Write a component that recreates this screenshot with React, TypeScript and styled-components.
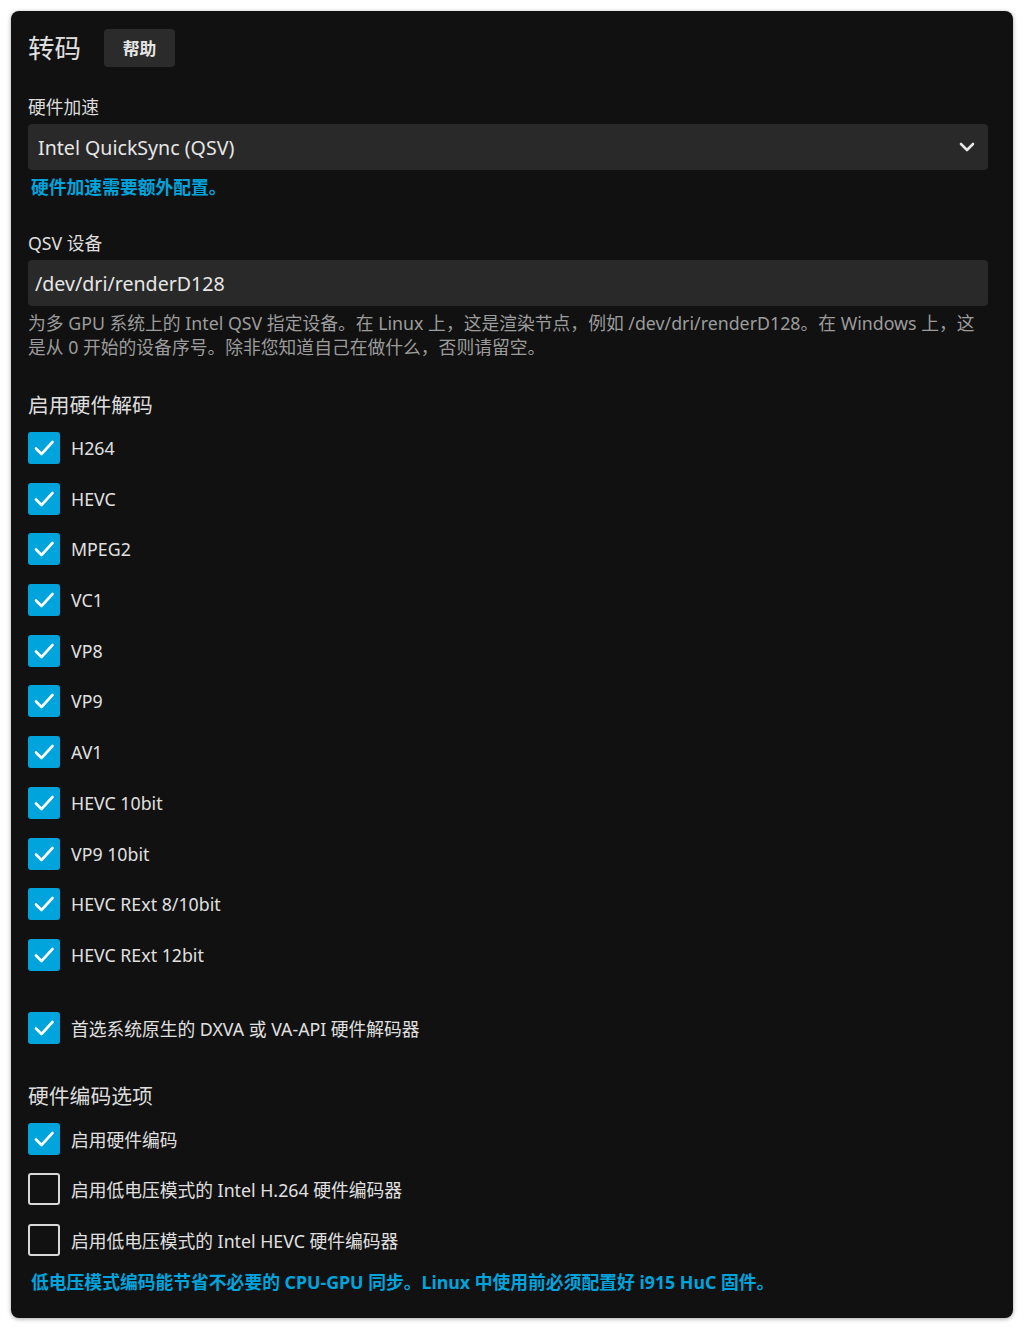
import { FC } from "react";
import styled, { createGlobalStyle } from "styled-components";

const GlobalStyle = createGlobalStyle`
  body {
    margin: 0;
    padding: 11px;
    background: #ffffff;
    font-family: "Noto Sans", "Noto Sans CJK SC", sans-serif;
  }
`;

const Card = styled.div`
  width: 1002px;
  box-sizing: border-box;
  background: #111111;
  border-radius: 8px;
  box-shadow: 0 1px 4px rgba(0, 0, 0, 0.35);
  padding: 18px 25px 24px 17px;
  color: #dddddd;
`;

const Header = styled.div`
  display: flex;
  align-items: center;
  gap: 23px;
`;

const Title = styled.h2`
  margin: 0;
  font-size: 26.5px;
  font-weight: 400;
  line-height: 38px;
  color: #e0e0e0;
`;

const HelpButton = styled.button`
  height: 38px;
  width: 71px;
  border: none;
  border-radius: 4px;
  background: #2b2b2b;
  color: #e6e6e6;
  font-family: inherit;
  font-size: 16.8px;
  font-weight: 700;
`;

const Label = styled.div<{ $top: number }>`
  margin-top: ${(p) => p.$top}px;
  margin-bottom: 5px;
  font-size: 17.75px;
  line-height: 24px;
`;

const Field = styled.div`
  height: 46px;
  display: flex;
  align-items: center;
  justify-content: space-between;
  background: #292929;
  border-radius: 4px;
  font-size: 19.6px;
  color: #e6e6e6;
`;

const SelectField = styled(Field)`
  padding: 0 13px 0 10px;
`;

const InputField = styled(Field)`
  padding: 0 7px;
`;

const LinkNote = styled.div<{ $top?: number }>`
  margin-top: ${(p) => p.$top ?? 5}px;
  padding-left: 3px;
  font-size: 17.8px;
  line-height: 24px;
  font-weight: 700;
  color: #00a4dc;
`;

const Description = styled.div`
  margin-top: 5px;
  font-size: 17.8px;
  line-height: 24px;
  color: #9c9c9c;
`;

const SectionTitle = styled.h3<{ $top: number }>`
  margin: ${(p) => p.$top}px 0 13px;
  font-size: 20.8px;
  font-weight: 400;
  line-height: 28px;
`;

const CheckList = styled.div<{ $gap: number }>`
  display: flex;
  flex-direction: column;
  gap: ${(p) => p.$gap}px;
`;

const Row = styled.label`
  display: flex;
  align-items: center;
  gap: 11px;
  height: 32px;
  font-size: 17.75px;
  color: #e0e0e0;
`;

const Box = styled.span<{ $checked: boolean }>`
  width: 32px;
  height: 32px;
  box-sizing: border-box;
  border-radius: 3px;
  display: flex;
  align-items: center;
  justify-content: center;
  background: ${(p) => (p.$checked ? "#00a4dc" : "transparent")};
  border: ${(p) => (p.$checked ? "none" : "2px solid #d8d8d8")};
`;

const Spacer = styled.div<{ $h: number }>`
  height: ${(p) => p.$h}px;
`;

const Chevron = () => (
  <svg width="16" height="10" viewBox="0 0 16 10">
    <path d="M2 2 L8 8 L14 2" fill="none" stroke="#e6e6e6" strokeWidth="2.6" strokeLinecap="round" strokeLinejoin="round" />
  </svg>
);

const Tick = () => (
  <svg width="22" height="18" viewBox="0 0 22 18">
    <path d="M3 9.5 L8.5 15 L19.5 3" fill="none" stroke="#ffffff" strokeWidth="2.6" strokeLinecap="round" strokeLinejoin="round" />
  </svg>
);

const Check: FC<{ label: string; checked?: boolean }> = ({ label, checked = true }) => (
  <Row>
    <Box $checked={checked}>{checked && <Tick />}</Box>
    {label}
  </Row>
);

const decoders = [
  "H264",
  "HEVC",
  "MPEG2",
  "VC1",
  "VP8",
  "VP9",
  "AV1",
  "HEVC 10bit",
  "VP9 10bit",
  "HEVC RExt 8/10bit",
  "HEVC RExt 12bit",
];

const App: FC = () => (
  <>
    <GlobalStyle />
    <Card>
      <Header>
        <Title>转码</Title>
        <HelpButton>帮助</HelpButton>
      </Header>

      <Label $top={28}>硬件加速</Label>
      <SelectField>
        <span>Intel QuickSync (QSV)</span>
        <Chevron />
      </SelectField>
      <LinkNote>硬件加速需要额外配置。</LinkNote>

      <Label $top={32}>QSV 设备</Label>
      <InputField>/dev/dri/renderD128</InputField>
      <Description>
        为多 GPU 系统上的 Intel QSV 指定设备。在 Linux 上，这是渲染节点，例如 /dev/dri/renderD128。在 Windows 上，这是从 0 开始的设备序号。除非您知道自己在做什么，否则请留空。
      </Description>

      <SectionTitle $top={32}>启用硬件解码</SectionTitle>
      <CheckList $gap={18.7}>
        {decoders.map((d) => (
          <Check key={d} label={d} />
        ))}
      </CheckList>
      <Spacer $h={41} />
      <Check label="首选系统原生的 DXVA 或 VA-API 硬件解码器" />

      <SectionTitle $top={38}>硬件编码选项</SectionTitle>
      <CheckList $gap={18.5}>
        <Check label="启用硬件编码" />
        <Check label="启用低电压模式的 Intel H.264 硬件编码器" checked={false} />
        <Check label="启用低电压模式的 Intel HEVC 硬件编码器" checked={false} />
      </CheckList>
      <LinkNote $top={14}>
        低电压模式编码能节省不必要的 CPU-GPU 同步。Linux 中使用前必须配置好 i915 HuC 固件。
      </LinkNote>
    </Card>
  </>
);

export default App;
